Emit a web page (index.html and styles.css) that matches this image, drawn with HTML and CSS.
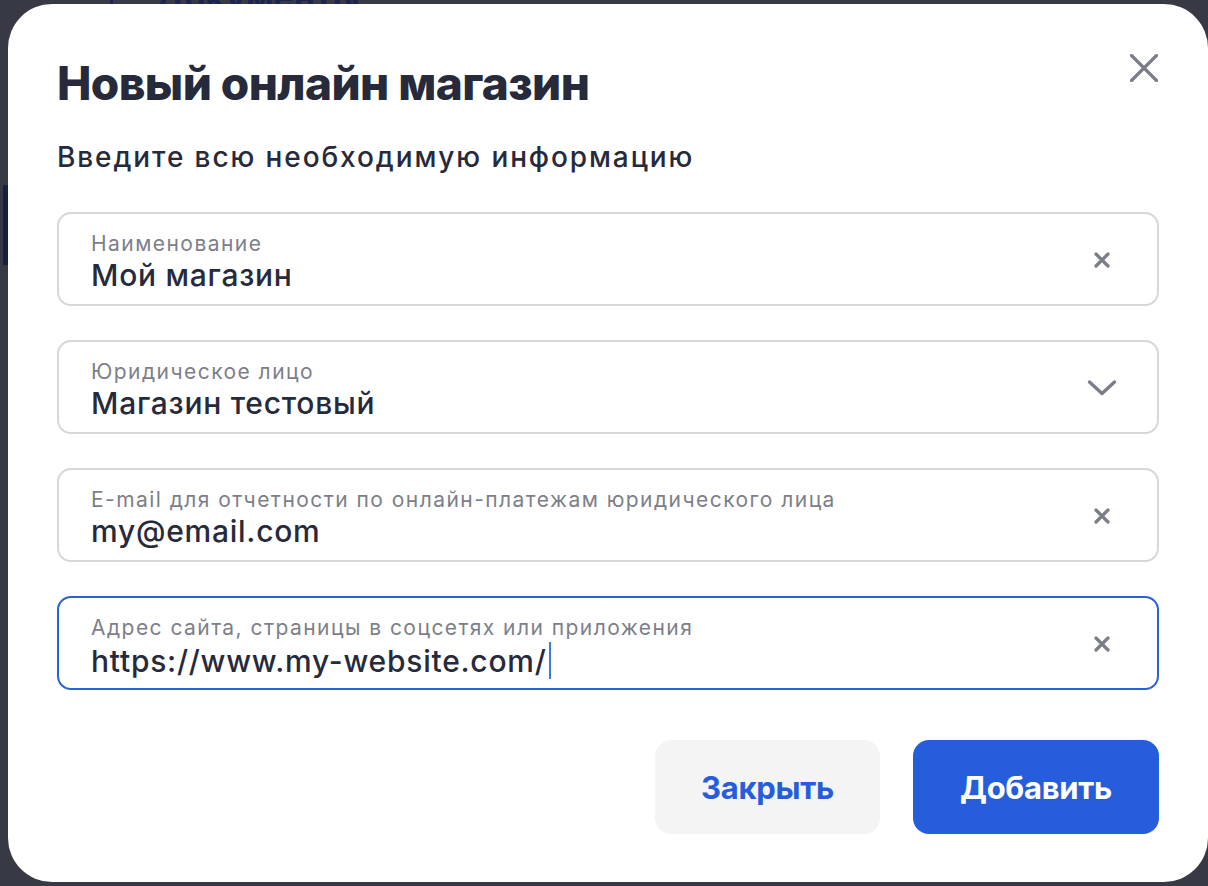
FILE: index.html
```html
<!DOCTYPE html>
<html lang="ru">
<head>
<meta charset="utf-8">
<title>Новый онлайн магазин</title>
<link rel="stylesheet" href="styles.css">
</head>
<body>
<div class="backdrop">
  <div class="bg-tab">Документы</div>
  <div class="bg-divider"></div>
  <div class="bg-side"></div>
</div>
<div class="modal">
  <div class="modal-head">
    <h1 class="title">Новый онлайн магазин</h1>
    <button class="close" aria-label="Закрыть">
      <svg width="28" height="28" viewBox="0 0 28 28"><path d="M1.5 1.5 L26.5 26.5 M26.5 1.5 L1.5 26.5" stroke="#7b7e88" stroke-width="3.2" stroke-linecap="round" fill="none"/></svg>
    </button>
  </div>
  <p class="subtitle">Введите всю необходимую информацию</p>

  <div class="fields">
    <div class="field">
      <div class="field-body">
        <div class="label">Наименование</div>
        <div class="value">Мой магазин</div>
      </div>
      <span class="icon"><svg width="16" height="16" viewBox="0 0 16 16"><path d="M2 2 L14 14 M14 2 L2 14" stroke="#7b7e88" stroke-width="3.2" stroke-linecap="round" fill="none"/></svg></span>
    </div>
    <div class="field">
      <div class="field-body">
        <div class="label">Юридическое лицо</div>
        <div class="value">Магазин тестовый</div>
      </div>
      <span class="icon"><svg width="30" height="18" viewBox="0 0 30 18"><path d="M2.5 3 L15 14.5 L27.5 3" stroke="#7b7e88" stroke-width="3.4" stroke-linecap="round" stroke-linejoin="round" fill="none"/></svg></span>
    </div>
    <div class="field">
      <div class="field-body">
        <div class="label">E-mail для отчетности по онлайн-платежам юридического лица</div>
        <div class="value">my@email.com</div>
      </div>
      <span class="icon"><svg width="16" height="16" viewBox="0 0 16 16"><path d="M2 2 L14 14 M14 2 L2 14" stroke="#7b7e88" stroke-width="3.2" stroke-linecap="round" fill="none"/></svg></span>
    </div>
    <div class="field field-focus">
      <div class="field-body">
        <div class="label">Адрес сайта, страницы в соцсетях или приложения</div>
        <div class="value">https://www.my-website.com/<span class="caret"></span></div>
      </div>
      <span class="icon"><svg width="16" height="16" viewBox="0 0 16 16"><path d="M2 2 L14 14 M14 2 L2 14" stroke="#7b7e88" stroke-width="3.2" stroke-linecap="round" fill="none"/></svg></span>
    </div>
  </div>

  <div class="actions">
    <button class="btn btn-secondary">Закрыть</button>
    <button class="btn btn-primary">Добавить</button>
  </div>
</div>
</body>
</html>
```
FILE: styles.css
```css
html, body {
  margin: 0;
  padding: 0;
}
body {
  background: #373a44;
  font-family: Inter, "Noto Sans", sans-serif;
  color: #262a3b;
  padding: 4px 0 0 8px;
  height: 886px;
  box-sizing: border-box;
  overflow: hidden;
  position: relative;
}
.backdrop .bg-tab {
  position: absolute;
  left: 155px;
  top: -24px;
  font-size: 34px;
  font-weight: 700;
  color: #1b2550;
}
.backdrop .bg-divider {
  position: absolute;
  left: 110px;
  top: 0;
  width: 3px;
  height: 4px;
  background: #1b2550;
}
.backdrop .bg-side {
  position: absolute;
  left: 3px;
  top: 185px;
  width: 5px;
  height: 80px;
  background: #17203e;
}
.modal {
  position: relative;
  width: 1200px;
  height: 878px;
  box-sizing: border-box;
  background: #ffffff;
  border-radius: 44px;
  padding: 50px 49px 0 49px;
}
.modal-head {
  display: flex;
  justify-content: space-between;
  align-items: flex-start;
}
.title {
  margin: 0;
  font-size: 46px;
  line-height: 58px;
  font-weight: 800;
  letter-spacing: -0.6px;
  color: #262a3b;
}
.close {
  border: 0;
  background: none;
  padding: 0;
  margin: 0 1px 0 0;
  width: 28px;
  height: 28px;
  cursor: pointer;
}
.close svg {
  display: block;
}
.subtitle {
  margin: 28px 0 0 0;
  font-size: 28px;
  line-height: 34px;
  font-weight: 500;
  letter-spacing: 1.9px;
  color: #262a3b;
}
.fields {
  margin-top: 38px;
  display: flex;
  flex-direction: column;
  gap: 34px;
}
.field {
  height: 94px;
  box-sizing: border-box;
  border: 2px solid #d6d6db;
  border-radius: 14px;
  padding: 18px 40px 12px 32px;
  display: flex;
  align-items: center;
}
.field-focus {
  border-color: #2b60d9;
}
.field-body {
  flex: 1;
  align-self: stretch;
  display: flex;
  flex-direction: column;
  gap: 3px;
}
.label {
  font-size: 21px;
  line-height: 23px;
  font-weight: 400;
  letter-spacing: 1.45px;
  color: #7c7f8a;
  white-space: nowrap;
}
.value {
  font-size: 30px;
  line-height: 34px;
  font-weight: 500;
  letter-spacing: 0.75px;
  color: #262a3b;
  white-space: nowrap;
  display: flex;
  align-items: center;
}
.caret {
  display: inline-block;
  width: 2px;
  height: 37px;
  background: #3a7be0;
  margin-left: 2px;
}
.icon {
  width: 30px;
  display: flex;
  justify-content: center;
  align-items: center;
  margin-top: -5px;
}
.icon svg {
  display: block;
}
.actions {
  margin-top: 50px;
  display: flex;
  justify-content: flex-end;
  gap: 33px;
}
.btn {
  height: 94px;
  border: 0;
  border-radius: 16px;
  font-family: Inter, "Noto Sans", sans-serif;
  font-size: 31px;
  font-weight: 700;
  letter-spacing: -0.3px;
  cursor: pointer;
}
.btn-secondary {
  width: 225px;
  background: #f4f4f4;
  color: #265ddb;
}
.btn-primary {
  width: 246px;
  background: #265ddb;
  color: #ffffff;
}
```
